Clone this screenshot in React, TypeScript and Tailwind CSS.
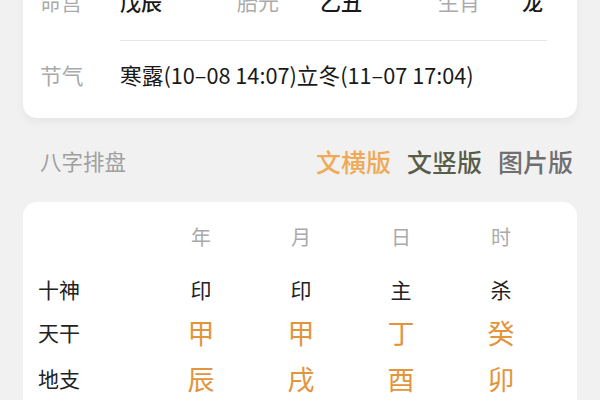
import React from "react";

const font = { fontFamily: '"Noto Sans CJK SC", "Noto Sans", sans-serif' };

const cols = ["年", "月", "日", "时"];
const shishen = ["印", "印", "主", "杀"];
const tiangan = ["甲", "甲", "丁", "癸"];
const dizhi = ["辰", "戌", "酉", "卯"];

export default function App() {
  return (
    <div
      className="w-[600px] h-[400px] overflow-hidden bg-[#f1f1f1] px-[23px]"
      style={font}
    >
      {/* Card 1 */}
      <div className="mt-[-38px] bg-white rounded-[14px] shadow-[0_4px_10px_rgba(0,0,0,0.05)] pl-[17px] pb-[5px]">
        <div className="h-[78px] flex items-center text-[21px] leading-none">
          <span className="w-[80px] text-[#aaaaaa]">命宫</span>
          <span className="w-[117px] text-[#1a1a1a] font-medium">戊辰</span>
          <span className="w-[83px] text-[#aaaaaa]">胎元</span>
          <span className="w-[118px] text-[#1a1a1a] font-medium">乙丑</span>
          <span className="w-[84px] text-[#aaaaaa]">生肖</span>
          <span className="text-[#1a1a1a] font-medium">龙</span>
        </div>
        <div className="ml-[80px] mr-[30px] h-px bg-[#e6e6e6]" />
        <div className="h-[72px] flex items-center pb-[4px] text-[21.7px] leading-none">
          <span className="w-[80px] text-[#aaaaaa]">节气</span>
          <span className="text-[#1a1a1a]">寒露(10–08 14:07)立冬(11–07 17:04)</span>
        </div>
      </div>

      {/* Section header */}
      <div className="h-[84px] flex items-center justify-between pl-[17px] pr-[4px] pt-[2px]">
        <span className="text-[21.5px] text-[#a0a0a0] leading-none">八字排盘</span>
        <div className="flex items-center gap-[16px] text-[25px] leading-none font-medium">
          <span className="text-[#f0aa55]">文横版</span>
          <span className="text-[#575d48]">文竖版</span>
          <span className="text-[#6f6f6f]">图片版</span>
        </div>
      </div>

      {/* Card 2 */}
      <div className="bg-white rounded-[14px] pl-[15px] pt-[17px] pb-[20px]">
        <div className="grid grid-cols-[113px_100px_100px_100px_100px] items-center">
          <div className="h-[36px]" />
          {cols.map((c, i) => (
            <div key={i} className="h-[36px] flex items-center justify-center text-[20px] text-[#aaaaaa] leading-none">
              {c}
            </div>
          ))}

          <div className="h-[16px] col-span-5" />

          <div className="h-[36px] flex items-center text-[21px] text-[#222222] leading-none">十神</div>
          {shishen.map((c, i) => (
            <div key={i} className="h-[36px] flex items-center justify-center text-[21px] text-[#222222] leading-none">
              {c}
            </div>
          ))}

          <div className="h-[7px] col-span-5" />

          <div className="h-[36px] flex items-center text-[21px] text-[#222222] leading-none">天干</div>
          {tiangan.map((c, i) => (
            <div key={i} className="h-[36px] flex items-center justify-center text-[27px] text-[#e2953c] leading-none">
              {c}
            </div>
          ))}

          <div className="h-[10px] col-span-5" />

          <div className="h-[36px] flex items-center text-[21px] text-[#222222] leading-none">地支</div>
          {dizhi.map((c, i) => (
            <div key={i} className="h-[36px] flex items-center justify-center text-[27px] text-[#e2953c] leading-none">
              {c}
            </div>
          ))}
        </div>
      </div>
    </div>
  );
}
